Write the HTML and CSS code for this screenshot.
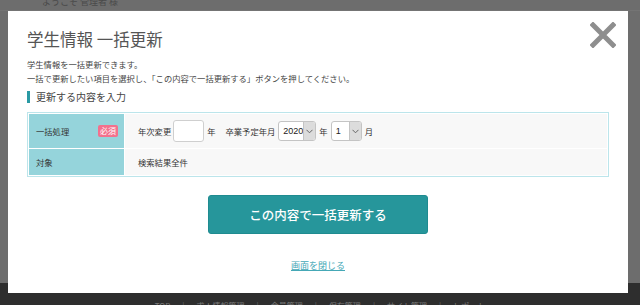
FILE: index.html
```html
<!DOCTYPE html>
<html lang="ja">
<head>
  <meta charset="UTF-8">
  <title>学生情報 一括更新</title>
  <link rel="stylesheet" href="styles.css">
</head>
<body>
  <div class="page">
    <div class="page-header">
      <span class="welcome">ようこそ 管理者 様</span>
    </div>
    <div class="page-main"></div>
    <div class="page-footer">
      <a href="#">TOP</a><span class="sep">|</span>
      <a href="#">求人情報管理</a><span class="sep">|</span>
      <a href="#">会員管理</a><span class="sep">|</span>
      <a href="#">保存管理</a><span class="sep">|</span>
      <a href="#">サイト管理</a><span class="sep">|</span>
      <a href="#">レポート</a>
    </div>
  </div>

  <div class="modal">
    <a href="#" class="modal-close" aria-label="閉じる">
      <svg width="26" height="26" viewBox="0 0 26 26">
        <path d="M3 3 L23 23 M23 3 L3 23" stroke="#8e8e8e" stroke-width="5" stroke-linecap="square" fill="none"/>
      </svg>
    </a>
    <h1 class="modal-title">学生情報 一括更新</h1>
    <p class="modal-desc">
      学生情報を一括更新できます。<br>
      一括で更新したい項目を選択し、「この内容で一括更新する」ボタンを押してください。
    </p>
    <h2 class="section-title">更新する内容を入力</h2>
    <table class="form-table">
      <tr class="row-main">
        <th>
          <div class="th-inner">一括処理<span class="badge">必須</span></div>
        </th>
        <td>
          <div class="fields">
            <span class="label">年次変更</span>
            <input type="text" class="input-year">
            <span class="unit">年</span>
            <span class="label label-grad">卒業予定年月</span>
            <div class="select select-year">
              <span class="select-value">2020</span>
              <span class="select-arrow">
                <svg width="7" height="5" viewBox="0 0 7 5"><path d="M0.5 0.8 L3.5 3.8 L6.5 0.8" stroke="#666" stroke-width="1" fill="none"/></svg>
              </span>
            </div>
            <span class="unit">年</span>
            <div class="select select-month">
              <span class="select-value">1</span>
              <span class="select-arrow">
                <svg width="7" height="5" viewBox="0 0 7 5"><path d="M0.5 0.8 L3.5 3.8 L6.5 0.8" stroke="#666" stroke-width="1" fill="none"/></svg>
              </span>
            </div>
            <span class="unit">月</span>
          </div>
        </td>
      </tr>
      <tr class="row-target">
        <th>対象</th>
        <td>検索結果全件</td>
      </tr>
    </table>
    <div class="actions">
      <button class="btn-submit">この内容で一括更新する</button>
      <a href="#" class="link-close">画面を閉じる</a>
    </div>
  </div>
</body>
</html>
```

FILE: styles.css
```css
body {
  margin: 0;
  height: 305px;
  overflow: hidden;
  background: #6d6d6d;
  font-family: "Noto Sans CJK JP", "Noto Sans", sans-serif;
  color: #333;
}
.page {
  height: 305px;
  display: flex;
  flex-direction: column;
}
.page-header {
  height: 10px;
  padding-left: 42px;
  overflow: hidden;
  border-bottom: 1px solid #747474;
}
.welcome {
  display: block;
  font-size: 9px;
  line-height: 12px;
  color: #4a4a4a;
  margin-top: -4px;
}
.page-main {
  flex: 1;
}
.page-footer {
  height: 22px;
  background: #2e2e2e;
  display: flex;
  justify-content: center;
  gap: 12px;
  padding-top: 17px;
  box-sizing: border-box;
  font-size: 8px;
  line-height: 11px;
}
.page-footer a {
  color: #7a7a7a;
  text-decoration: none;
}
.page-footer .sep {
  color: #6a6a6a;
}

.modal {
  position: absolute;
  top: 11px;
  left: 8px;
  width: 620px;
  height: 282px;
  background: #fff;
  padding: 16px 19px 0;
  box-sizing: border-box;
}
.modal-close {
  position: absolute;
  top: 11px;
  right: 12px;
  display: block;
  line-height: 0;
}
.modal-title {
  margin: 0;
  font-size: 16.5px;
  line-height: 24px;
  font-weight: 400;
  color: #555;
}
.modal-desc {
  margin: 6px 0 0;
  font-size: 8.3px;
  line-height: 14px;
  color: #444;
}
.section-title {
  margin: 6px 0 0;
  border-left: 3px solid #2a9aa4;
  padding-left: 6px;
  font-size: 10px;
  line-height: 12px;
  font-weight: 400;
  color: #444;
}

.form-table {
  width: 100%;
  margin-top: 9px;
  border: 1px solid #bce5eb;
  border-spacing: 1px;
  background: #fff;
  font-size: 8.3px;
  color: #333;
}
.form-table th {
  width: 95px;
  box-sizing: border-box;
  background: #95d4db;
  padding: 0 6px 0 7px;
  text-align: left;
  font-weight: 400;
}
.form-table td {
  background: #f8f8f8;
  padding: 0 13px;
}
.row-main th, .row-main td {
  height: 34px;
}
.row-target th, .row-target td {
  height: 26px;
}
.th-inner {
  display: flex;
  align-items: center;
  justify-content: space-between;
}
.badge {
  display: inline-block;
  width: 20px;
  height: 12px;
  line-height: 12px;
  border-radius: 2px;
  background: #f3718d;
  color: #fff;
  font-size: 8px;
  text-align: center;
}
.fields {
  display: flex;
  align-items: center;
}
.input-year {
  width: 31px;
  height: 22px;
  box-sizing: border-box;
  margin: 0 3px 0 2px;
  border: 1px solid #cfcfcf;
  border-radius: 3px;
  background: #fff;
}
.label-grad {
  margin-left: 10px;
}
.select {
  display: flex;
  height: 20px;
  box-sizing: border-box;
  border: 1px solid #c4c4c4;
  border-radius: 3px;
  background: #fff;
  overflow: hidden;
  margin: 0 3px;
  font-size: 9px;
  color: #222;
  font-family: "Liberation Sans", sans-serif;
}
.select-year {
  width: 38px;
}
.select-month {
  width: 31px;
}
.select-value {
  flex: 1;
  padding-left: 4px;
  line-height: 18px;
}
.select-arrow {
  width: 11px;
  background: #dcdcdc;
  border-left: 1px solid #c4c4c4;
  display: flex;
  align-items: center;
  justify-content: center;
}

.actions {
  display: flex;
  flex-direction: column;
  align-items: center;
}
.btn-submit {
  margin-top: 18px;
  width: 220px;
  height: 39px;
  border: 1px solid #1f8b90;
  border-radius: 3px;
  background: #26969b;
  color: #fff;
  font-family: "Noto Sans CJK JP", sans-serif;
  font-size: 12.5px;
  font-weight: 500;
  cursor: pointer;
}
.link-close {
  margin-top: 25px;
  font-size: 9px;
  line-height: 13px;
  color: #45a8b6;
  text-decoration: underline;
}
```
